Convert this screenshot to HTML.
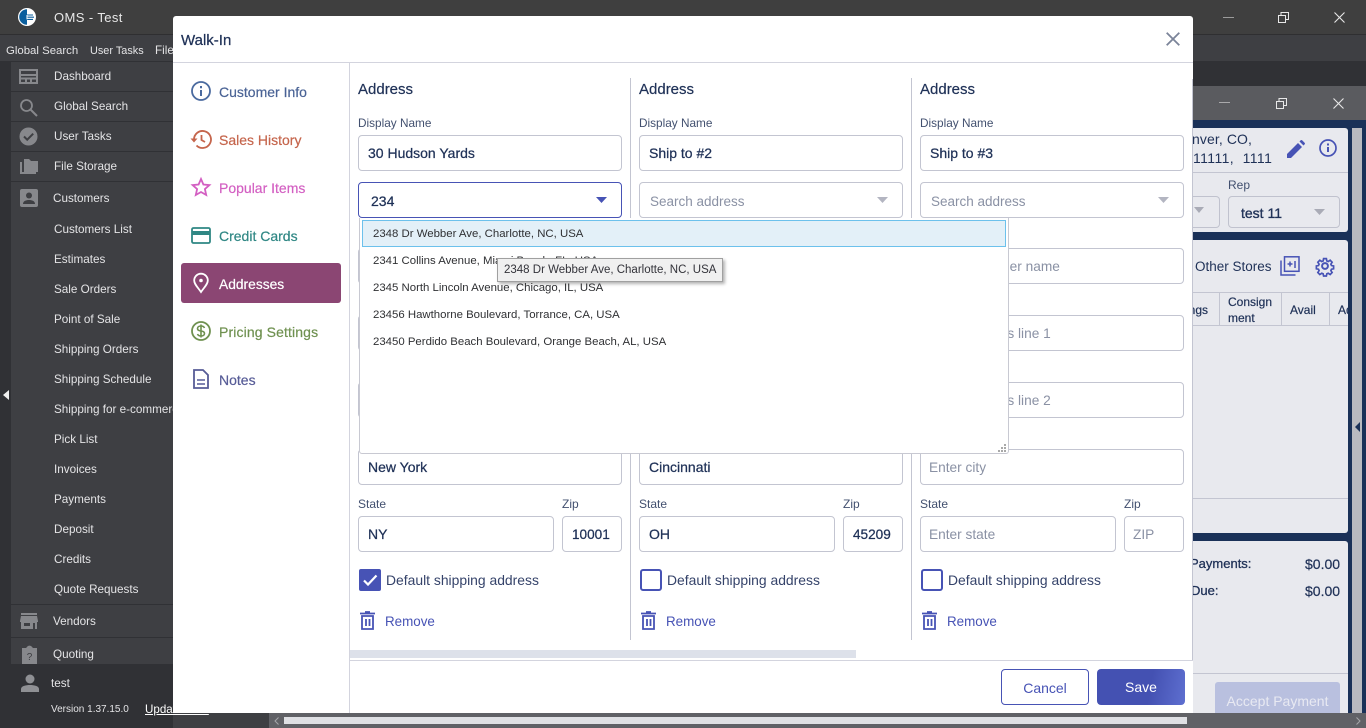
<!DOCTYPE html>
<html><head><meta charset="utf-8"><title>OMS - Test</title>
<style>
html,body{margin:0;padding:0;width:1366px;height:728px;overflow:hidden;background:#3e3f43;font-family:"Liberation Sans",sans-serif}
*{box-sizing:border-box}
.a{position:absolute}
.t{position:absolute;white-space:nowrap;line-height:16px}
.s{color:#e4e4e6;font-size:11.7px}
.m{color:#1f3157;font-size:14px}
.l{color:#42506f;font-size:12px}
.h{color:#1f3157;font-size:15px;-webkit-text-stroke:.2px #1f3157}
.i{position:absolute;background:#fff;border:1px solid #c3c5d1;border-radius:4px;height:36px;color:#1f3157;font-size:14px;padding:0 9px;line-height:35px;white-space:nowrap;overflow:hidden;-webkit-text-stroke:.25px #1f3157}
.p{color:#8a91a4;-webkit-text-stroke:0;padding-left:8px;font-size:13.7px}
.n{font-size:14px;position:absolute;left:219px;line-height:16px;white-space:nowrap;-webkit-text-stroke:.2px}
.d{position:absolute;top:78px;width:1px;height:562px;background:#c3c5d1}
.o{position:absolute;color:#2f3033;font-size:11.4px;line-height:16px;white-space:nowrap;left:373px}
svg{position:absolute;overflow:visible}
.line{position:absolute;left:11px;width:162px;height:1px;background:#303135}
</style></head><body>
<!-- Chrome -->
<div class="a" style="left:0;top:0;width:1366px;height:34px;background:#3f3f3f"></div>
<div class="a" style="left:0;top:34px;width:1366px;height:1px;background:#2f2f31"></div>
<div class="a" style="left:0;top:35px;width:1366px;height:26px;background:#3e3f43"></div>
<div class="a" style="left:0;top:61px;width:1366px;height:25px;background:#303135"></div>
<div class="a" style="left:0;top:61px;width:11px;height:667px;background:#303135"></div>
<div class="a" style="left:11px;top:62px;width:162px;height:602px;background:#3e3f43"></div>
<svg style="left:18px;top:8px" width="18" height="18" viewBox="0 0 18 18"><circle cx="9" cy="9" r="9" fill="#fff"/><path d="M9 1.200A7.800 7.800 0 0 0 9 16.800Z" fill="#0b5f9e"/><path d="M5 7h10M4 9.200h12M5 11.400h10" stroke="#0b5f9e" stroke-width="1.100"/><path d="M9 7v4.400" stroke="#fff" stroke-width="1"/></svg>
<div class="t" style="left:54px;top:10px;color:#e8e8e8;font-size:13px;letter-spacing:.4px">OMS - Test</div>
<div class="t s" style="left:6px;top:43px;font-size:11.400px">Global Search</div>
<div class="t s" style="left:90px;top:43px;font-size:10.900px">User Tasks</div>
<div class="t s" style="left:155px;top:43px">File</div>
<svg style="left:1223px;top:17px" width="11" height="2"><path d="M0 .5H11" stroke="#9b9b9b"/></svg>
<svg style="left:1278px;top:12px" width="11" height="11" fill="none" stroke="#e8e8e8"><path d="M.5 3.500h7v7h-7zM3 3V.5h7.500v7H8"/></svg>
<svg style="left:1334px;top:12px" width="11" height="11"><path d="M.5.5l10 10M10.500.5l-10 10" stroke="#e8e8e8" stroke-width="1.100"/></svg>
<!-- Sidebar -->
<div class="line" style="top:91px"></div><div class="line" style="top:121px"></div><div class="line" style="top:151px"></div><div class="line" style="top:181px"></div><div class="line" style="top:604px"></div><div class="line" style="top:637px"></div>
<svg style="left:19px;top:69px" width="19" height="15" fill="none" stroke="#87888c" stroke-width="2"><rect x="1" y="1" width="17" height="13"/><path d="M1 6h17M7 9v5M12 9v5M1 9.500h17"/></svg>
<svg style="left:19px;top:98px" width="19" height="19" fill="none" stroke="#87888c" stroke-width="1.800"><circle cx="7.500" cy="7.500" r="5.500"/><path d="M11.500 11.500l6.500 6.500" stroke-width="2"/></svg>
<svg style="left:19px;top:127px" width="19" height="19"><circle cx="9.500" cy="9.500" r="9" fill="#87888c"/><path d="M5 9.500l3.200 3.200 6-6" fill="none" stroke="#3e3f43" stroke-width="2"/></svg>
<svg style="left:19px;top:159px" width="19" height="15" fill="#87888c"><path d="M5 0h5l2 2h7v11H5zM1 3h2v10h14v2H1z"/></svg>
<svg style="left:20px;top:189px" width="18" height="18"><rect width="18" height="18" rx="2" fill="#87888c"/><circle cx="9" cy="6.500" r="3" fill="#3e3f43"/><path d="M3 15c0-3 3-4 6-4s6 1 6 4z" fill="#3e3f43"/></svg>
<svg style="left:20px;top:613px" width="18" height="16" fill="#87888c"><path d="M1 0h16v2H1zM1 3h16l1 5v1h-1v7H1V9H0V8zM4 10v3h6v-3zM13 10v6h2v-6z"/></svg>
<svg style="left:21px;top:645px" width="17" height="19"><path d="M1 3h4l1-1a3 3 0 0 1 5 0l1 1h4v16H1z" fill="#87888c"/><text x="8.500" y="15" font-size="10" font-family="Liberation Sans" text-anchor="middle" fill="#3e3f43">?</text></svg>
<div class="t s" style="left:54px;top:69px">Dashboard</div>
<div class="t s" style="left:54px;top:99px">Global Search</div>
<div class="t s" style="left:54px;top:129px">User Tasks</div>
<div class="t s" style="left:54px;top:159px">File Storage</div>
<div class="t s" style="left:53px;top:191px">Customers</div>
<div class="t s" style="left:54px;top:222px">Customers List</div>
<div class="t s" style="left:54px;top:252px">Estimates</div>
<div class="t s" style="left:54px;top:282px">Sale Orders</div>
<div class="t s" style="left:54px;top:312px">Point of Sale</div>
<div class="t s" style="left:54px;top:342px">Shipping Orders</div>
<div class="t s" style="left:54px;top:372px">Shipping Schedule</div>
<div class="t s" style="left:54px;top:402px">Shipping for e-commerce</div>
<div class="t s" style="left:54px;top:432px">Pick List</div>
<div class="t s" style="left:54px;top:462px">Invoices</div>
<div class="t s" style="left:54px;top:492px">Payments</div>
<div class="t s" style="left:54px;top:522px">Deposit</div>
<div class="t s" style="left:54px;top:552px">Credits</div>
<div class="t s" style="left:54px;top:582px">Quote Requests</div>
<div class="t s" style="left:53px;top:614px">Vendors</div>
<div class="t s" style="left:53px;top:647px">Quoting</div>
<svg style="left:3px;top:390px" width="6" height="10"><path d="M0 5L6 0V10Z" fill="#f0f0f0"/></svg>
<div class="a" style="left:11px;top:664px;width:162px;height:64px;background:#303135"></div>
<svg style="left:21px;top:674px" width="18" height="18" fill="#8f9094"><circle cx="9" cy="5" r="4.500"/><path d="M0 18v-3c0-3 5-4 9-4s9 1 9 4v3z"/></svg>
<div class="t s" style="left:51px;top:676px">test</div>
<div class="t" style="left:51px;top:702px;color:#e4e4e6;font-size:10px">Version 1.37.15.0</div>
<div class="t" style="left:145px;top:702px;color:#fff;font-size:11.600px;text-decoration:underline">Update Now</div>
<!-- Right background app -->
<div class="a" style="left:1193px;top:86px;width:173px;height:34px;background:#5a5b5f"></div>
<div class="a" style="left:1193px;top:120px;width:173px;height:593px;background:#1a3158"></div>
<svg style="left:1219px;top:102px" width="11" height="2"><path d="M0 .5H11" stroke="#a9a9ab"/></svg>
<svg style="left:1276px;top:98px" width="11" height="11" fill="none" stroke="#e8e8e8"><path d="M.5 3.500h7v7h-7zM3 3V.5h7.500v7H8"/></svg>
<svg style="left:1333px;top:98px" width="11" height="11"><path d="M.5.5l10 10M10.500.5l-10 10" stroke="#e8e8e8" stroke-width="1.100"/></svg>
<div class="a" style="left:1193px;top:128px;width:155px;height:104px;background:#e8e9ee;border-radius:0 3px 3px 0"></div>
<div class="a" style="left:1193px;top:172px;width:155px;height:1px;background:#c3c5d1"></div>
<div class="a" style="left:1193px;top:240px;width:155px;height:293px;background:#e8e9ee;border-radius:0 3px 3px 0"></div>
<div class="a" style="left:1193px;top:541px;width:155px;height:172px;background:#e8e9ee;border-radius:0 3px 0 0"></div>
<div class="a" style="left:1352px;top:128px;width:10px;height:585px;background:#b9bac0"></div>
<svg style="left:1355px;top:422px" width="5" height="10"><path d="M0 5L5 0V10Z" fill="#1a3158"/></svg>
<div class="t m" style="left:1193px;top:131px;letter-spacing:.1px;width:80px;overflow:hidden;text-indent:-1px">nver, CO,</div>
<div class="t m" style="left:1193px;top:150px;letter-spacing:.4px">11111,&nbsp; 1111</div>
<svg style="left:1287px;top:140px" width="18" height="18"><path d="M0 18V14L11 3l4 4L4 18zM12.500 1.500l1.200-1.200a1 1 0 0 1 1.400 0l2.600 2.600a1 1 0 0 1 0 1.400L16.500 5.500z" fill="#4753b5"/></svg>
<svg style="left:1319px;top:139px" width="18" height="18" fill="none" stroke="#4753b5" stroke-width="1.700"><circle cx="9" cy="9" r="8"/><path d="M9 8v5M9 4.500v2" stroke-width="2"/></svg>
<div class="t l" style="left:1228px;top:177px">Rep</div>
<div class="a" style="left:1193px;top:196px;width:27px;height:32px;border:1px solid #c0c2ce;border-left:0;border-radius:0 4px 4px 0"></div>
<svg style="left:1194px;top:207px" width="10" height="6"><path d="M0 0H10L5 6Z" fill="#a9abb6"/></svg>
<div class="i" style="left:1228px;top:196px;width:112px;height:32px;background:#e8e9ee;line-height:32px;padding-left:12px;border-color:#c0c2ce;-webkit-text-stroke:.35px #1f3157">test 11</div>
<svg style="left:1314px;top:209px" width="11" height="6"><path d="M0 0H11L5.500 6Z" fill="#a9abb6"/></svg>
<div class="t m" style="left:1195px;top:259px;font-size:13.500px">Other Stores</div>
<svg style="left:1280px;top:256px" width="20" height="20" fill="none" stroke="#4753b5" stroke-width="1.500"><rect x="4.500" y=".8" width="14.500" height="14.500"/><path d="M1 4.500V19h14.500"/><path d="M7.500 8h5M10 5.500v5M15 5v7"/></svg>
<svg style="left:1315px;top:256px" width="20" height="20" viewBox="0 0 24 24" fill="none" stroke="#4753b5" stroke-width="2.400"><circle cx="12" cy="12" r="3.500"/><path d="M10 1.500h4l.6 3.200 2 .9 2.800-1.800 2.800 2.800-1.800 2.800.9 2 3 .6v4l-3 .6-.9 2 1.800 2.800-2.800 2.800-2.800-1.800-2 .9-.6 3h-4l-.6-3-2-.9-2.800 1.800-2.800-2.800 1.800-2.800-.9-2-3-.6v-4l3-.6.9-2-1.800-2.800 2.800-2.800 2.800 1.800 2-.9z" transform="translate(1.900 1.900) scale(.84)"/></svg>
<div class="a" style="left:1193px;top:292px;width:155px;height:1px;background:#c3c5d1"></div>
<div class="a" style="left:1193px;top:325px;width:155px;height:1px;background:#c3c5d1"></div>
<div class="a" style="left:1219px;top:292px;width:1px;height:33px;background:#c3c5d1"></div>
<div class="a" style="left:1281px;top:292px;width:1px;height:33px;background:#c3c5d1"></div>
<div class="a" style="left:1329px;top:292px;width:1px;height:33px;background:#c3c5d1"></div>
<div class="t" style="left:1193px;top:302px;width:15px;overflow:hidden;color:#1f3157;font-size:12px;text-align:right;direction:rtl;-webkit-text-stroke:.2px #1f3157">ngs</div>
<div class="t" style="left:1228px;top:294px;color:#1f3157;font-size:12px;line-height:16px;-webkit-text-stroke:.2px #1f3157">Consign<br>ment</div>
<div class="t" style="left:1290px;top:302px;color:#1f3157;font-size:12px;-webkit-text-stroke:.2px #1f3157">Avail</div>
<div class="t" style="left:1338px;top:302px;color:#1f3157;font-size:12px;width:10px;overflow:hidden;-webkit-text-stroke:.2px #1f3157">Ad</div>
<div class="a" style="left:1193px;top:498px;width:155px;height:1px;background:#c3c5d1"></div>
<div class="t m" style="left:1190px;top:556px;font-size:13px;-webkit-text-stroke:.3px #1f3157">Payments:</div>
<div class="t m" style="left:1191px;top:583px;font-size:13px;-webkit-text-stroke:.3px #1f3157">Due:</div>
<div class="t m" style="left:1305px;top:556px;-webkit-text-stroke:.2px #1f3157">$0.00</div>
<div class="t m" style="left:1305px;top:583px;-webkit-text-stroke:.2px #1f3157">$0.00</div>
<div class="a" style="left:1193px;top:673px;width:155px;height:1px;background:#c3c5d1"></div>
<div class="a" style="left:1215px;top:682px;width:125px;height:31px;background:#b9c0df;border-radius:3px 3px 0 0;color:#e8e9f2;font-size:14px;text-align:center;line-height:38px">Accept Payment</div>
<!-- bottom scrollbar -->
<div class="a" style="left:269px;top:713px;width:1097px;height:15px;background:#606166"></div>
<div class="a" style="left:284px;top:717px;width:903px;height:7px;background:#dfe0e4"></div>
<svg style="left:274px;top:717px" width="5" height="8" fill="none" stroke="#a5a6aa"><path d="M4.500 .5L1 4l3.500 3.500"/></svg>
<svg style="left:1356px;top:717px" width="5" height="8" fill="none" stroke="#a5a6aa"><path d="M.5 .5L4 4 .5 7.500"/></svg>
<!-- Modal -->
<div class="a" style="left:173px;top:16px;width:1020px;height:697px;background:#fff;border-radius:3px 3px 0 0"></div>
<div class="a" style="left:173px;top:62px;width:1020px;height:1px;background:#d3d4de"></div>
<div class="a" style="left:349px;top:63px;width:1px;height:650px;background:#d3d4de"></div>
<div class="a" style="left:1192px;top:79px;width:1px;height:581px;background:#c3c5d1"></div>
<div class="a" style="left:350px;top:660px;width:843px;height:1px;background:#d3d4de"></div>
<div class="a" style="left:350px;top:650px;width:506px;height:8px;background:#dde1ea"></div>
<div class="t" style="left:181px;top:33px;color:#1f3157;font-size:15px;-webkit-text-stroke:.25px #1f3157">Walk-In</div>
<svg style="left:1166px;top:32px" width="14" height="14"><path d="M.7.700l12.600 12.600M13.300.700L.7 13.300" stroke="#7b8499" stroke-width="1.800"/></svg>
<!-- Left nav -->
<svg style="left:191px;top:81px" width="20" height="20" fill="none" stroke="#4a6a9f" stroke-width="1.800"><circle cx="10" cy="10" r="9"/><path d="M10 9v6M10 5v2.200" stroke-width="2"/></svg>
<div class="n" style="top:84px;color:#4a6395">Customer Info</div>
<svg style="left:190px;top:130px" width="21" height="19" fill="none" stroke="#c5654c" stroke-width="1.800"><path d="M4 9.500a8.500 8.500 0 1 1 2.500 6"/><path d="M11.500 5v5l3.500 2"/><path d="M.5 8.500h7L4 12.500z" fill="#c5654c" stroke="none"/></svg>
<div class="n" style="top:132px;color:#c5654c">Sales History</div>
<svg style="left:191px;top:177px" width="20" height="20" fill="none" stroke="#d35fc2" stroke-width="1.800"><path d="M10 2l2.400 5.500 6 .6-4.500 4 1.300 5.900L10 15l-5.200 3 1.300-5.900-4.500-4 6-.6z"/></svg>
<div class="n" style="top:180px;color:#d35fc2">Popular Items</div>
<svg style="left:191px;top:227px" width="20" height="17"><rect x="1" y="1" width="18" height="15" rx="1.500" fill="none" stroke="#2f8784" stroke-width="1.800"/><rect x="1" y="4" width="18" height="4" fill="#2f8784"/></svg>
<div class="n" style="top:228px;color:#2f8784">Credit Cards</div>
<div class="a" style="left:181px;top:263px;width:160px;height:40px;background:#8b4673;border-radius:3px"></div>
<svg style="left:193px;top:273px" width="16" height="20" fill="none" stroke="#fff" stroke-width="1.800"><path d="M8 19C4.500 14 1.200 11 1.200 7.500a6.800 6.800 0 0 1 13.600 0C14.800 11 11.500 14 8 19z"/><circle cx="8" cy="7.500" r="1.800" fill="#fff" stroke="none"/></svg>
<div class="n" style="top:277px;color:#fff;font-size:13.800px">Addresses</div>
<svg style="left:191px;top:321px" width="20" height="20" fill="none" stroke="#6f9150" stroke-width="1.800"><circle cx="10" cy="10" r="9"/><path d="M13.500 7c-.5-1.300-2-2-3.500-2-2 0-3.500 1-3.500 2.500S8 9.800 10 10s3.500 1 3.500 2.500S12 15 10 15c-1.600 0-3-.7-3.500-2M10 3.500v13" stroke-width="1.600"/></svg>
<div class="n" style="top:324px;color:#6f9150;letter-spacing:.12px">Pricing Settings</div>
<svg style="left:193px;top:369px" width="16" height="20" fill="none" stroke="#575c97" stroke-width="1.800"><path d="M1 1h9l5 5v13H1z"/><path d="M4 11h8M4 15h8" stroke-width="1.600"/></svg>
<div class="n" style="top:372px;color:#575c97">Notes</div>
<!-- Columns -->
<div class="d" style="left:630px"></div><div class="d" style="left:911px"></div>
<div class="t h" style="left:358px;top:82px">Address</div><div class="t h" style="left:639px;top:82px">Address</div><div class="t h" style="left:920px;top:82px">Address</div>
<div class="t l" style="left:358px;top:115px;font-size:11.800px">Display Name</div><div class="t l" style="left:639px;top:115px;font-size:11.800px">Display Name</div><div class="t l" style="left:920px;top:115px;font-size:11.800px">Display Name</div>
<div class="i" style="left:358px;top:135px;width:264px">30 Hudson Yards</div>
<div class="i" style="left:639px;top:135px;width:264px">Ship to #2</div>
<div class="i" style="left:920px;top:135px;width:264px">Ship to #3</div>
<div class="i" style="left:358px;top:182px;width:264px;border-color:#4753b5;padding-left:12px;line-height:37px">234</div>
<svg style="left:596px;top:197px" width="11" height="6"><path d="M0 0H11L5.500 6Z" fill="#4753b5"/></svg>
<div class="i p" style="left:639px;top:182px;width:264px;padding-left:10px;line-height:37px;font-size:13.500px">Search address</div>
<svg style="left:877px;top:197px" width="11" height="6"><path d="M0 0H11L5.500 6Z" fill="#b3b5c1"/></svg>
<div class="i p" style="left:920px;top:182px;width:264px;padding-left:10px;line-height:37px;font-size:13.500px">Search address</div>
<svg style="left:1158px;top:197px" width="11" height="6"><path d="M0 0H11L5.500 6Z" fill="#b3b5c1"/></svg>
<div class="i" style="left:358px;top:248px;width:264px"></div>
<div class="i p" style="left:920px;top:248px;width:264px">Enter customer name</div>
<div class="i" style="left:358px;top:315px;width:264px"></div>
<div class="i p" style="left:920px;top:315px;width:264px">Enter address line 1</div>
<div class="i" style="left:358px;top:382px;width:264px"></div>
<div class="i p" style="left:920px;top:382px;width:264px">Enter address line 2</div>
<div class="i" style="left:358px;top:449px;width:264px">New York</div>
<div class="i" style="left:639px;top:449px;width:264px">Cincinnati</div>
<div class="i p" style="left:920px;top:449px;width:264px">Enter city</div>
<div class="t l" style="left:358px;top:496px">State</div><div class="t l" style="left:562px;top:496px">Zip</div>
<div class="t l" style="left:639px;top:496px">State</div><div class="t l" style="left:843px;top:496px">Zip</div>
<div class="t l" style="left:920px;top:496px">State</div><div class="t l" style="left:1124px;top:496px">Zip</div>
<div class="i" style="left:358px;top:516px;width:196px">NY</div>
<div class="i" style="left:562px;top:516px;width:60px;font-size:13.600px">10001</div>
<div class="i" style="left:639px;top:516px;width:196px">OH</div>
<div class="i" style="left:843px;top:516px;width:60px;font-size:13.600px">45209</div>
<div class="i p" style="left:920px;top:516px;width:196px">Enter state</div>
<div class="i p" style="left:1124px;top:516px;width:60px">ZIP</div>
<svg style="left:359px;top:569px" width="22" height="22"><rect width="22" height="22" rx="2" fill="#4753b5"/><path d="M5 11.500l4 4 8.500-9" fill="none" stroke="#fff" stroke-width="2.200"/></svg>
<svg style="left:640px;top:569px" width="22" height="22"><rect x="1" y="1" width="20" height="20" rx="2" fill="#fff" stroke="#4753b5" stroke-width="2"/></svg>
<svg style="left:921px;top:569px" width="22" height="22"><rect x="1" y="1" width="20" height="20" rx="2" fill="#fff" stroke="#4753b5" stroke-width="2"/></svg>
<div class="t m" style="left:386px;top:572px;color:#35436a;font-size:13.900px">Default shipping address</div>
<div class="t m" style="left:667px;top:572px;color:#35436a;font-size:13.900px">Default shipping address</div>
<div class="t m" style="left:948px;top:572px;color:#35436a;font-size:13.900px">Default shipping address</div>
<svg style="left:360px;top:611px" width="16" height="19" fill="none" stroke="#4753b5" stroke-width="1.800"><path d="M0 2.500h15M5 1h5"/><path d="M2 5h11v13H2zM6 8v7M9.500 8v7"/></svg>
<svg style="left:641px;top:611px" width="16" height="19" fill="none" stroke="#4753b5" stroke-width="1.800"><path d="M0 2.500h15M5 1h5"/><path d="M2 5h11v13H2zM6 8v7M9.500 8v7"/></svg>
<svg style="left:922px;top:611px" width="16" height="19" fill="none" stroke="#4753b5" stroke-width="1.800"><path d="M0 2.500h15M5 1h5"/><path d="M2 5h11v13H2zM6 8v7M9.500 8v7"/></svg>
<div class="t m" style="left:385px;top:614px;color:#4753b5;font-size:13.400px">Remove</div>
<div class="t m" style="left:666px;top:614px;color:#4753b5;font-size:13.400px">Remove</div>
<div class="t m" style="left:947px;top:614px;color:#4753b5;font-size:13.400px">Remove</div>
<!-- Dropdown -->
<div class="a" style="left:359px;top:218px;width:650px;height:236px;background:#fff;border:1px solid #c8c9d2;border-top:0;border-radius:0 0 3px 3px"></div>
<div class="a" style="left:362px;top:220px;width:644px;height:27px;background:#e3f0f8;border:1px solid #6cc1ec"></div>
<div class="o" style="top:226px">2348 Dr Webber Ave, Charlotte, NC, USA</div>
<div class="o" style="top:253px">2341 Collins Avenue, Miami Beach, FL, USA</div>
<div class="o" style="top:280px">2345 North Lincoln Avenue, Chicago, IL, USA</div>
<div class="o" style="top:307px">23456 Hawthorne Boulevard, Torrance, CA, USA</div>
<div class="o" style="top:334px">23450 Perdido Beach Boulevard, Orange Beach, AL, USA</div>
<svg style="left:997px;top:443px" width="10" height="10" fill="#a9a9a9"><rect x="7" y="1" width="2" height="2"/><rect x="4" y="4" width="2" height="2"/><rect x="7" y="4" width="2" height="2"/><rect x="1" y="7" width="2" height="2"/><rect x="4" y="7" width="2" height="2"/><rect x="7" y="7" width="2" height="2"/></svg>
<div class="a" style="left:497px;top:258px;width:226px;height:24px;background:#f0f0f0;border:1px solid #a0a0a0;box-shadow:2px 2px 3px rgba(0,0,0,.3);color:#33333a;font-size:11.500px;line-height:22px;padding-left:6px;white-space:nowrap">2348 Dr Webber Ave, Charlotte, NC, USA</div>
<!-- Footer -->
<div class="a" style="left:1001px;top:669px;width:88px;height:36px;background:#fff;border:1px solid #4753b5;border-radius:4px;color:#4753b5;font-size:14px;text-align:center;line-height:36px">Cancel</div>
<div class="a" style="left:1097px;top:669px;width:88px;height:36px;background:linear-gradient(100deg,#4451b2 60%,#5e6fd0);border-radius:4px;color:#fff;font-size:14px;text-align:center;line-height:36px">Save</div>
</body></html>
